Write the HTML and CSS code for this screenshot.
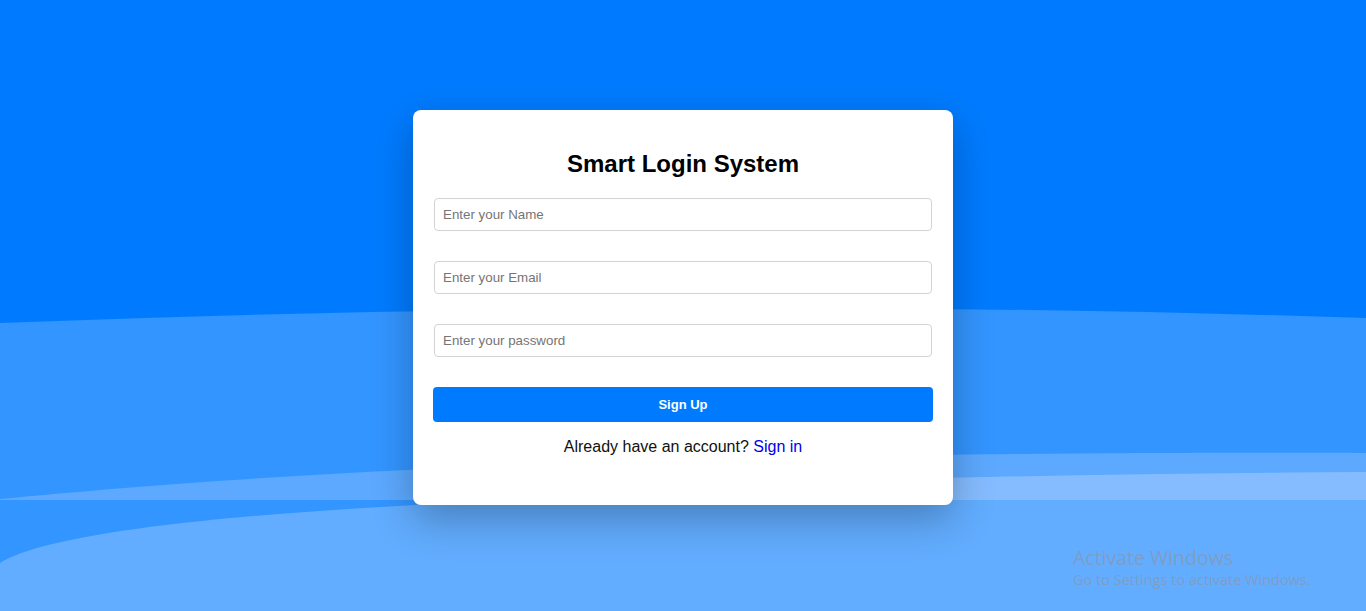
FILE: index.html
```html
<!DOCTYPE html>
<html lang="en">
<head>
<meta charset="utf-8">
<title>Smart Login System</title>
<link rel="stylesheet" href="styles.css">
</head>
<body>
<svg class="bg" viewBox="0 0 1366 611" preserveAspectRatio="none" aria-hidden="true">
  <rect x="0" y="0" width="1366" height="611" fill="#007bff"/>
  <path d="M0,323 Q700,296 1366,318 L1366,611 L0,611 Z" fill="#3395ff"/>
  <path d="M0,499 C280,472 650,451 1366,453 L1366,500 L0,500 Z" fill="#5ca9ff"/>
  <path d="M420,500 Q760,476 1366,472 L1366,500 Z" fill="#85bcff"/>
  <path d="M0,563 C40,538 180,514 520,500 L1366,500 L1366,611 L0,611 Z" fill="#62adff"/>
</svg>

<main class="card">
  <h2 class="title">Smart Login System</h2>
  <form class="form">
    <input class="field" type="text" placeholder="Enter your Name">
    <input class="field" type="email" placeholder="Enter your Email">
    <input class="field" type="password" placeholder="Enter your password">
    <button class="btn" type="button">Sign Up</button>
  </form>
  <p class="switch">Already have an account? <a class="link" href="#">Sign in</a></p>
</main>

<div class="watermark">
  <div class="wm-title">Activate Windows</div>
  <div class="wm-sub">Go to Settings to activate Windows.</div>
</div>
</body>
</html>
```

FILE: styles.css
```css
html, body {
  margin: 0;
  padding: 0;
}

body {
  height: 100vh;
  overflow: hidden;
  position: relative;
  display: flex;
  align-items: center;
  justify-content: center;
  font-family: "Liberation Sans", Arial, sans-serif;
  background: #007bff;
}

.bg {
  position: absolute;
  inset: 0;
  width: 100%;
  height: 100%;
  display: block;
}

.card {
  position: relative;
  z-index: 1;
  width: 540px;
  box-sizing: border-box;
  margin-top: 4px;
  padding: 20px 20px 49px;
  background: #fff;
  border-radius: 8px;
  box-shadow: 0 14px 40px rgba(0, 0, 0, 0.27);
  text-align: center;
}

.title {
  margin: 20px 0;
  font-size: 24px;
  line-height: 28px;
  font-weight: bold;
  color: #000;
}

.form {
  display: flex;
  flex-direction: column;
  gap: 30px;
  margin: 0;
}

.field {
  margin: 0 1px;
  padding: 8px;
  border: 1px solid #d3d3d3;
  border-radius: 4px;
  font-family: "Liberation Sans", Arial, sans-serif;
  font-size: 13.333px;
  color: #000;
  background: #fff;
  outline: none;
}

.field::placeholder {
  color: #757575;
}

.btn {
  width: 100%;
  padding: 10px;
  border: none;
  border-radius: 4px;
  background: #007bff;
  color: #fff;
  font-family: "Liberation Sans", Arial, sans-serif;
  font-size: 13px;
  line-height: 15px;
  font-weight: bold;
  cursor: pointer;
}

.switch {
  margin: 16px 0 0;
  font-size: 16px;
  color: #111;
}

.link {
  color: #0000ee;
  text-decoration: none;
}

.watermark {
  position: absolute;
  left: 1073px;
  top: 545px;
  z-index: 2;
  font-family: "Open Sans", "Noto Sans", sans-serif;
  color: rgba(140, 150, 170, 0.7);
  pointer-events: none;
}

.wm-title {
  font-size: 19.5px;
  line-height: 26px;
}

.wm-sub {
  font-size: 14.5px;
  line-height: 18px;
}
```
